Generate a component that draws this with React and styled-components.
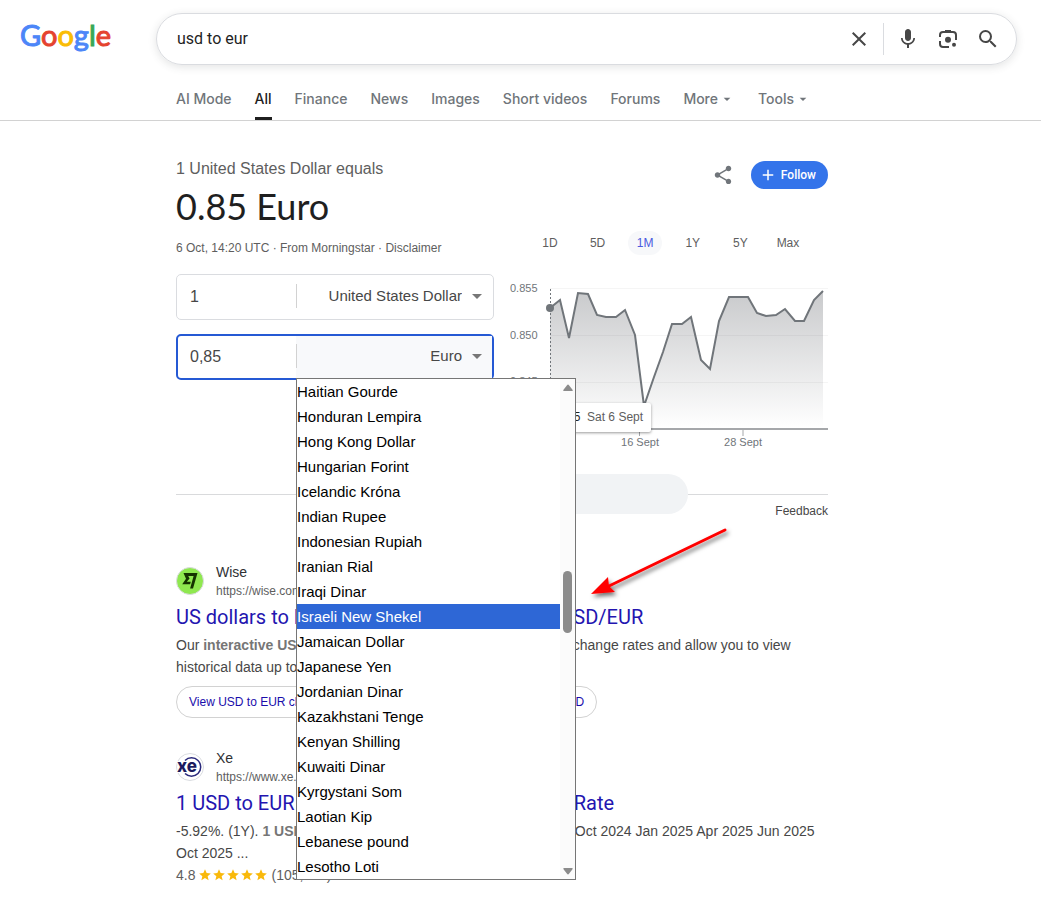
import React from 'react';
import styled, { createGlobalStyle, css } from 'styled-components';
import { MdAdd, MdArrowDropDown, MdClose, MdMic, MdSearch, MdShare, MdStar } from 'react-icons/md';

const display = "Lato, 'Liberation Sans', sans-serif";
const ui = "Roboto, 'Liberation Sans', sans-serif";
const nav = "Inter, Roboto, 'Liberation Sans', sans-serif";
const body = "'Liberation Sans', Arial, sans-serif";

const GlobalStyle = createGlobalStyle`
  *, *::before, *::after { box-sizing: border-box; }
  body { margin: 0; background: #fff; color: #474747; font-family: ${body}; }
  button, input, select { font: inherit; color: inherit; margin: 0; }
  button { cursor: pointer; border: 0; background: none; padding: 0; }
  a { text-decoration: none; color: inherit; }
  h1, h2, h3, p, ul { margin: 0; padding: 0; font-weight: 400; }
`;

const Page = styled.div`
  position: relative;
  min-height: 100vh;
  overflow: hidden;
`;

const Header = styled.header`
  border-bottom: 1px solid #d2d2d2;
`;

const TopRow = styled.div`
  display: flex;
  align-items: center;
  padding: 13px 24px 0 20px;
`;

const Logo = styled.a`
  flex: none;
  width: 136px;
  font: 400 29px/36px ${display};
  padding-bottom: 8px;
`;

const LogoLetter = styled.span`
  color: ${(p) => p.$color};
  -webkit-text-stroke: 1px ${(p) => p.$color};
`;

const SearchBar = styled.form`
  flex: 1;
  display: flex;
  align-items: center;
  height: 52px;
  padding: 0 8px 0 20px;
  border: 1px solid #dadce0;
  border-radius: 26px;
  box-shadow: 0 2px 8px rgba(60, 64, 67, 0.14);
`;

const SearchInput = styled.input`
  flex: 1;
  min-width: 0;
  border: 0;
  outline: 0;
  padding: 0;
  background: transparent;
  color: #1f1f1f;
  font: 16px/24px ${ui};
`;

const IconButton = styled.button`
  display: flex;
  align-items: center;
  justify-content: center;
  width: 40px;
  height: 40px;
  color: #474747;
  font-size: ${(p) => p.$size || 24}px;
`;

const BarRule = styled.span`
  width: 1px;
  height: 32px;
  margin: 0 4px;
  background: #dadce0;
`;

const Tabs = styled.nav`
  display: flex;
  gap: 23px;
  height: 55px;
  padding: 16px 0 0 176px;
  font: 500 14px/20px ${nav};
`;

const Tab = styled.a`
  display: flex;
  align-items: center;
  color: ${(p) => (p.$active ? '#1f1f1f' : '#70757a')};
  border-bottom: 3px solid ${(p) => (p.$active ? '#1f1f1f' : 'transparent')};
  white-space: nowrap;
`;

const TabButton = styled.button`
  display: flex;
  align-items: center;
  gap: 1px;
  padding-bottom: 3px;
  color: #70757a;
  svg { width: 16px; height: 16px; }
`;

const Main = styled.main`
  max-width: 652px;
  margin-left: 176px;
`;

const Widget = styled.section`
  padding-top: 38px;
`;

const WidgetHead = styled.div`
  display: flex;
  justify-content: space-between;
`;

const Equals = styled.p`
  font-size: 16px;
  line-height: 20px;
  color: #5e5e5e;
`;

const Result = styled.h1`
  margin-top: 6px;
  font: 36px/42px ${display};
  color: #1f1f1f;
`;

const Meta = styled.p`
  margin-top: 12px;
  font-size: 12px;
  line-height: 18px;
  color: #5e5e5e;
`;

const Actions = styled.div`
  display: flex;
  align-items: center;
  height: 28px;
  margin-top: 2px;
  gap: 8px;
`;

const Follow = styled.button`
  display: flex;
  align-items: center;
  gap: 4px;
  height: 28px;
  padding: 0 12px 0 8px;
  border-radius: 14px;
  background: #3474ea;
  color: #fff;
  font: 500 12px/28px ${ui};
  svg { width: 18px; height: 18px; }
`;

const WidgetBody = styled.div`
  display: flex;
  gap: 16px;
`;

const Fields = styled.div`
  flex: 1;
  display: flex;
  flex-direction: column;
  gap: 14px;
  padding-top: 17px;
`;

const Field = styled.div`
  position: relative;
  display: flex;
  height: 46px;
  border-radius: 5px;
  border: 1px solid #dadce0;
  padding: 1px;
  ${(p) =>
    p.$focused &&
    css`
      border: 2px solid #2559d4;
      padding: 0;
    `}
`;

const Amount = styled.input`
  width: 118px;
  min-width: 0;
  border: 0;
  outline: 0;
  padding: 0 12px;
  background: transparent;
  font-size: 16px;
`;

const SelectBox = styled.div`
  position: relative;
  flex: 1;
  display: flex;
  align-items: center;
  padding-bottom: 2px;
  background: ${(p) => (p.$focused ? '#f8f9fb' : 'transparent')};
  &::before {
    content: '';
    width: 1px;
    height: 24px;
    background: #d2d2d2;
  }
  svg {
    position: absolute;
    right: 3px;
    width: 24px;
    height: 24px;
    color: #777;
    pointer-events: none;
  }
`;

const Select = styled.select`
  flex: 1;
  height: 38px;
  appearance: none;
  border: 0;
  outline: 0;
  background: transparent;
  padding: 0 30px 2px 0;
  text-align-last: right;
  font-size: 15px;
`;

const Popup = styled.div`
  position: absolute;
  z-index: 2;
  top: 42px;
  left: 118px;
  display: flex;
  width: 280px;
  border: 1px solid #767676;
  background: #fff;
`;

const Options = styled.ul`
  flex: 1;
  list-style: none;
`;

const Option = styled.li`
  height: 25px;
  font-size: 15px;
  line-height: 25px;
  white-space: nowrap;
  color: ${(p) => (p.$selected ? '#fff' : '#000')};
  background: ${(p) => (p.$selected ? '#2e67d6' : 'transparent')};
`;

const ScrollTrack = styled.div`
  display: flex;
  flex-direction: column;
  align-items: center;
  width: 15px;
  padding: 5px 0 4px;
  background: #fbfbfb;
`;

const ScrollArrow = styled.svg`
  width: 10px;
  height: 8px;
  fill: #8b8b8b;
`;

const ScrollThumb = styled.div`
  width: 9px;
  height: 62px;
  margin: 179px 0 auto;
  border-radius: 5px;
  background: #8b8b8b;
`;

const ChartColumn = styled.div`
  position: relative;
  width: 318px;
  margin-top: -26px;
`;

const Ranges = styled.div`
  display: flex;
  justify-content: space-between;
  padding: 0 23px;
  height: 24px;
`;

const Range = styled.button`
  width: 34px;
  height: 24px;
  border-radius: 12px;
  font-size: 12px;
  color: ${(p) => (p.$active ? '#4a5be0' : '#5e5e5e')};
  background: ${(p) => (p.$active ? '#f7f8fa' : 'transparent')};
`;

const Plot = styled.svg`
  display: block;
  width: 318px;
  height: 170px;
  margin-top: 25px;
  font: 11px ${body};
`;

const Tooltip = styled.div`
  position: absolute;
  left: 39px;
  top: 172px;
  height: 29px;
  padding: 0 8px;
  background: #fff;
  border-radius: 2px;
  box-shadow: 0 1px 3px rgba(0, 0, 0, 0.4);
  font-size: 12px;
  line-height: 28px;
  white-space: pre;
  color: #5e5e5e;
  b { font-weight: 400; color: #1f1f1f; }
`;

const More = styled.div`
  display: flex;
  align-items: center;
  margin-top: 24px;
  &::before, &::after {
    content: '';
    flex: 1;
    height: 1px;
    background: #d9dadc;
  }
`;

const MoreButton = styled.button`
  width: 372px;
  height: 40px;
  border-radius: 20px;
  background: #f1f3f5;
`;

const Feedback = styled.a`
  display: block;
  margin-top: -12px;
  text-align: right;
  font-size: 12px;
  line-height: 18px;
`;

const Results = styled.section`
  display: flex;
  flex-direction: column;
  gap: 30px;
  margin-top: 42px;
`;

const Source = styled.div`
  display: flex;
  align-items: center;
  gap: 12px;
  height: 38px;
`;

const Favicon = styled.svg`
  width: 28px;
  height: 28px;
`;

const SourceText = styled.div`
  padding-top: 1px;
`;

const SiteName = styled.div`
  font-size: 14px;
  line-height: 19px;
  color: #303134;
`;

const SiteUrl = styled.div`
  font-size: 12px;
  line-height: 18px;
  color: #5e5e5e;
`;

const Title = styled.h3`
  margin-top: 4px;
  font: 20px/26px ${ui};
  color: #2315b0;
  white-space: nowrap;
`;

const Snippet = styled.p`
  margin-top: 4px;
  font-size: 14px;
  line-height: 22px;
  b { color: #767676; }
`;

const Chips = styled.div`
  display: flex;
  gap: 8px;
  margin-top: 8px;
`;

const Chip = styled.a`
  height: 32px;
  padding: 0 12px;
  border: 1px solid #d2d2d2;
  border-radius: 16px;
  color: #1a0dab;
  font-size: 12px;
  line-height: 30px;
  white-space: nowrap;
`;

const Rating = styled.div`
  display: flex;
  align-items: center;
  font-size: 14px;
  line-height: 22px;
  color: #5e5e5e;
`;

const Stars = styled.span`
  display: flex;
  margin: 0 3px;
  color: #f9b90b;
  svg { width: 14px; height: 14px; }
`;

const Pointer = styled.svg`
  position: absolute;
  z-index: 3;
  left: 582px;
  top: 520px;
  width: 156px;
  height: 90px;
  pointer-events: none;
`;

const logoLetters = [
  ['G', '#4c86f8'], ['o', '#e5432f'], ['o', '#fabc05'],
  ['g', '#4c86f8'], ['l', '#3aa757'], ['e', '#e5432f'],
];

const tabs = ['AI Mode', 'All', 'Finance', 'News', 'Images', 'Short videos', 'Forums'];

const currencies = [
  'Haitian Gourde', 'Honduran Lempira', 'Hong Kong Dollar', 'Hungarian Forint',
  'Icelandic Króna', 'Indian Rupee', 'Indonesian Rupiah', 'Iranian Rial',
  'Iraqi Dinar', 'Israeli New Shekel', 'Jamaican Dollar', 'Japanese Yen',
  'Jordanian Dinar', 'Kazakhstani Tenge', 'Kenyan Shilling', 'Kuwaiti Dinar',
  'Kyrgystani Som', 'Laotian Kip', 'Lebanese pound', 'Lesotho Loti',
];

const line =
  '40,28 50,20 59,58 68,13 78,14 87,35 96,37 106,37 115,30 125,55 134,126 144,97 153,72 162,44 172,44 181,37 191,80 200,89 209,41 219,17 238,17 247,33 256,36 266,35 275,29 285,41 294,41 304,20 313,11';

function LensIcon() {
  return (
    <svg width="24" height="24" viewBox="0 0 24 24" fill="none" stroke="currentColor" strokeWidth="2">
      <path d="M4 10V8a3 3 0 0 1 3-3h10a3 3 0 0 1 3 3V13M4 14v3a3 3 0 0 0 3 3h6" />
      <path d="M9 4h6" />
      <circle cx="12" cy="12.700" r="3" fill="currentColor" stroke="none" />
      <circle cx="18" cy="17.800" r="2" fill="currentColor" stroke="none" />
    </svg>
  );
}

function Chart() {
  return (
    <Plot viewBox="0 0 318 170" role="img" aria-label="USD to EUR, last month">
      <defs>
        <linearGradient id="area" x1="0" y1="0" x2="0" y2="1">
          <stop offset="0" stopColor="#c9cacc" />
          <stop offset="1" stopColor="#fff" />
        </linearGradient>
      </defs>
      <g fill="#70757a">
        <text x="0" y="12">0.855</text>
        <text x="0" y="59">0.850</text>
        <text x="0" y="105">0.845</text>
        <text x="130" y="166" textAnchor="middle">16 Sept</text>
        <text x="233" y="166" textAnchor="middle">28 Sept</text>
      </g>
      <polygon points={`40,148 ${line} 313,148`} fill="url(#area)" />
      <path d="M40 8.500H318M40 55.500H318M40 102.500H318" stroke="#000" strokeOpacity="0.04" />
      <path d="M40 149H318" stroke="#a5a7aa" strokeWidth="2" />
      <path d="M129.500 150v6M233 150v6" stroke="#a5a7aa" strokeWidth="1" />
      <path d="M40.500 9V148" stroke="#70757a" strokeDasharray="2 2" />
      <polyline points={line} fill="none" stroke="#70757a" strokeWidth="2" />
      <circle cx="40" cy="28" r="4" fill="#70757a" />
    </Plot>
  );
}

function CurrencyField({ label, amount, currency, focused, children }) {
  return (
    <Field $focused={focused}>
      <Amount aria-label={`${label} amount`} defaultValue={amount} />
      <SelectBox $focused={focused}>
        <Select aria-label={`${label} currency`} defaultValue={currency}>
          <option>{currency}</option>
        </Select>
        <MdArrowDropDown />
      </SelectBox>
      {children}
    </Field>
  );
}

function CurrencyPopup() {
  return (
    <Popup>
      <Options role="listbox" aria-label="Currencies">
        {currencies.map((name) => {
          const selected = name === 'Israeli New Shekel';
          return (
            <Option key={name} role="option" aria-selected={selected} $selected={selected}>
              {name}
            </Option>
          );
        })}
      </Options>
      <ScrollTrack>
        <ScrollArrow viewBox="0 0 10 8"><path d="M4 1.200a1.200 1.200 0 0 1 2 0l3.500 4.600c.5.700.2 1.200-.6 1.200H1.100C.3 7 0 6.500.5 5.800z" /></ScrollArrow>
        <ScrollThumb />
        <ScrollArrow viewBox="0 0 10 8"><path d="M4 6.800a1.200 1.200 0 0 0 2 0l3.500-4.600C10 1.500 9.700 1 8.900 1H1.100C.3 1 0 1.500.5 2.200z" /></ScrollArrow>
      </ScrollTrack>
    </Popup>
  );
}

function SearchResult({ icon, name, url, title, children }) {
  return (
    <article>
      <Source>
        {icon}
        <SourceText>
          <SiteName>{name}</SiteName>
          <SiteUrl>{url}</SiteUrl>
        </SourceText>
      </Source>
      <Title><a href="#result">{title}</a></Title>
      {children}
    </article>
  );
}

const wiseIcon = (
  <Favicon viewBox="0 0 28 28">
    <circle cx="14" cy="14" r="13.500" fill="#8fe84f" stroke="#dadce0" />
    <path d="M7.500 6H21.500L17 21.500H14.100L17.600 9H12.200L13.600 11.600L10.800 14.800H14.800L14.100 17.300H6.200L10 11.700z" fill="#163300" />
  </Favicon>
);

const xeIcon = (
  <Favicon viewBox="0 0 28 28">
    <circle cx="14" cy="14" r="13.500" fill="#fff" stroke="#dadce0" />
    <path d="M9 7.500A9.200 9.200 0 1 1 9 20.500" fill="none" stroke="#2b2a7c" strokeWidth="1.500" />
    <text x="1" y="19" fontFamily="Inter, sans-serif" fontWeight="800" fontSize="17" fill="#1b1a5e" stroke="#fff" strokeWidth="2" paintOrder="stroke">xe</text>
  </Favicon>
);

export default function App() {
  return (
    <Page>
      <GlobalStyle />
      <Header>
        <TopRow>
          <Logo href="#home" aria-label="Google">
            {logoLetters.map(([letter, color], i) => (
              <LogoLetter key={i} $color={color}>{letter}</LogoLetter>
            ))}
          </Logo>
          <SearchBar onSubmit={(e) => e.preventDefault()}>
            <SearchInput aria-label="Search" defaultValue="usd to eur" />
            <IconButton type="button" aria-label="Clear"><MdClose /></IconButton>
            <BarRule />
            <IconButton type="button" aria-label="Search by voice"><MdMic /></IconButton>
            <IconButton type="button" aria-label="Search by image"><LensIcon /></IconButton>
            <IconButton type="submit" aria-label="Search"><MdSearch /></IconButton>
          </SearchBar>
        </TopRow>
        <Tabs>
          {tabs.map((name) => (
            <Tab key={name} href="#tab" $active={name === 'All'}>{name}</Tab>
          ))}
          <TabButton>More <MdArrowDropDown /></TabButton>
          <TabButton>Tools <MdArrowDropDown /></TabButton>
        </Tabs>
      </Header>

      <Main>
        <Widget>
          <WidgetHead>
            <div>
              <Equals>1 United States Dollar equals</Equals>
              <Result>0.85 Euro</Result>
              <Meta>6 Oct, 14:20 UTC · From Morningstar · <a href="#disclaimer">Disclaimer</a></Meta>
            </div>
            <Actions>
              <IconButton $size={22} aria-label="Share"><MdShare color="#70757a" /></IconButton>
              <Follow><MdAdd />Follow</Follow>
            </Actions>
          </WidgetHead>
          <WidgetBody>
            <Fields>
              <CurrencyField label="From" amount="1" currency="United States Dollar" />
              <CurrencyField label="To" amount="0,85" currency="Euro" focused>
                <CurrencyPopup />
              </CurrencyField>
            </Fields>
            <ChartColumn>
              <Ranges>
                {['1D', '5D', '1M', '1Y', '5Y', 'Max'].map((r) => (
                  <Range key={r} $active={r === '1M'}>{r}</Range>
                ))}
              </Ranges>
              <Chart />
              <Tooltip><b>0.85</b>  Sat 6 Sept</Tooltip>
            </ChartColumn>
          </WidgetBody>
          <More><MoreButton aria-label="More about this exchange rate" /></More>
          <Feedback href="#feedback">Feedback</Feedback>
        </Widget>

        <Results>
          <SearchResult
            icon={wiseIcon}
            name="Wise"
            url="https://wise.com"
            title="US dollars to Euros Exchange Rate Convert USD/EUR"
          >
            <Snippet>
              Our <b>interactive USD to EUR chart</b> use real-time mid-market exchange rates and allow you to view
              historical data up to 5 years.
            </Snippet>
            <Chips>
              <Chip href="#chart">View USD to EUR chart</Chip>
              <Chip href="#quotes">Currency quotes</Chip>
              <Chip href="#convert">Convert EUR to USD</Chip>
            </Chips>
          </SearchResult>
          <SearchResult
            icon={xeIcon}
            name="Xe"
            url="https://www.xe.com"
            title="1 USD to EUR – US Dollar to Euros Exchange Rate"
          >
            <Snippet>
              -5.92%. (1Y). <b>1 USD = 0.85321 EUR</b>. Oct 06, 2025, 14:20 UTC. Oct 2024 Jan 2025 Apr 2025 Jun 2025
              Oct 2025 ...
            </Snippet>
            <Rating>
              4.8
              <Stars aria-label="4.8 out of 5">
                <MdStar /><MdStar /><MdStar /><MdStar /><MdStar />
              </Stars>
              (105,433)
            </Rating>
          </SearchResult>
        </Results>
      </Main>

      <Pointer viewBox="0 0 156 90" aria-hidden="true">
        <defs>
          <filter id="shade" x="-10%" y="-10%" width="120%" height="130%">
            <feDropShadow dx="2" dy="3" stdDeviation="2" floodOpacity="0.55" />
          </filter>
        </defs>
        <g filter="url(#shade)" fill="#f00">
          <path d="M143 10L27 66" stroke="#f00" strokeWidth="3" strokeLinecap="round" />
          <path d="M9 74L26 57L27 66L33 72z" />
        </g>
      </Pointer>
    </Page>
  );
}
